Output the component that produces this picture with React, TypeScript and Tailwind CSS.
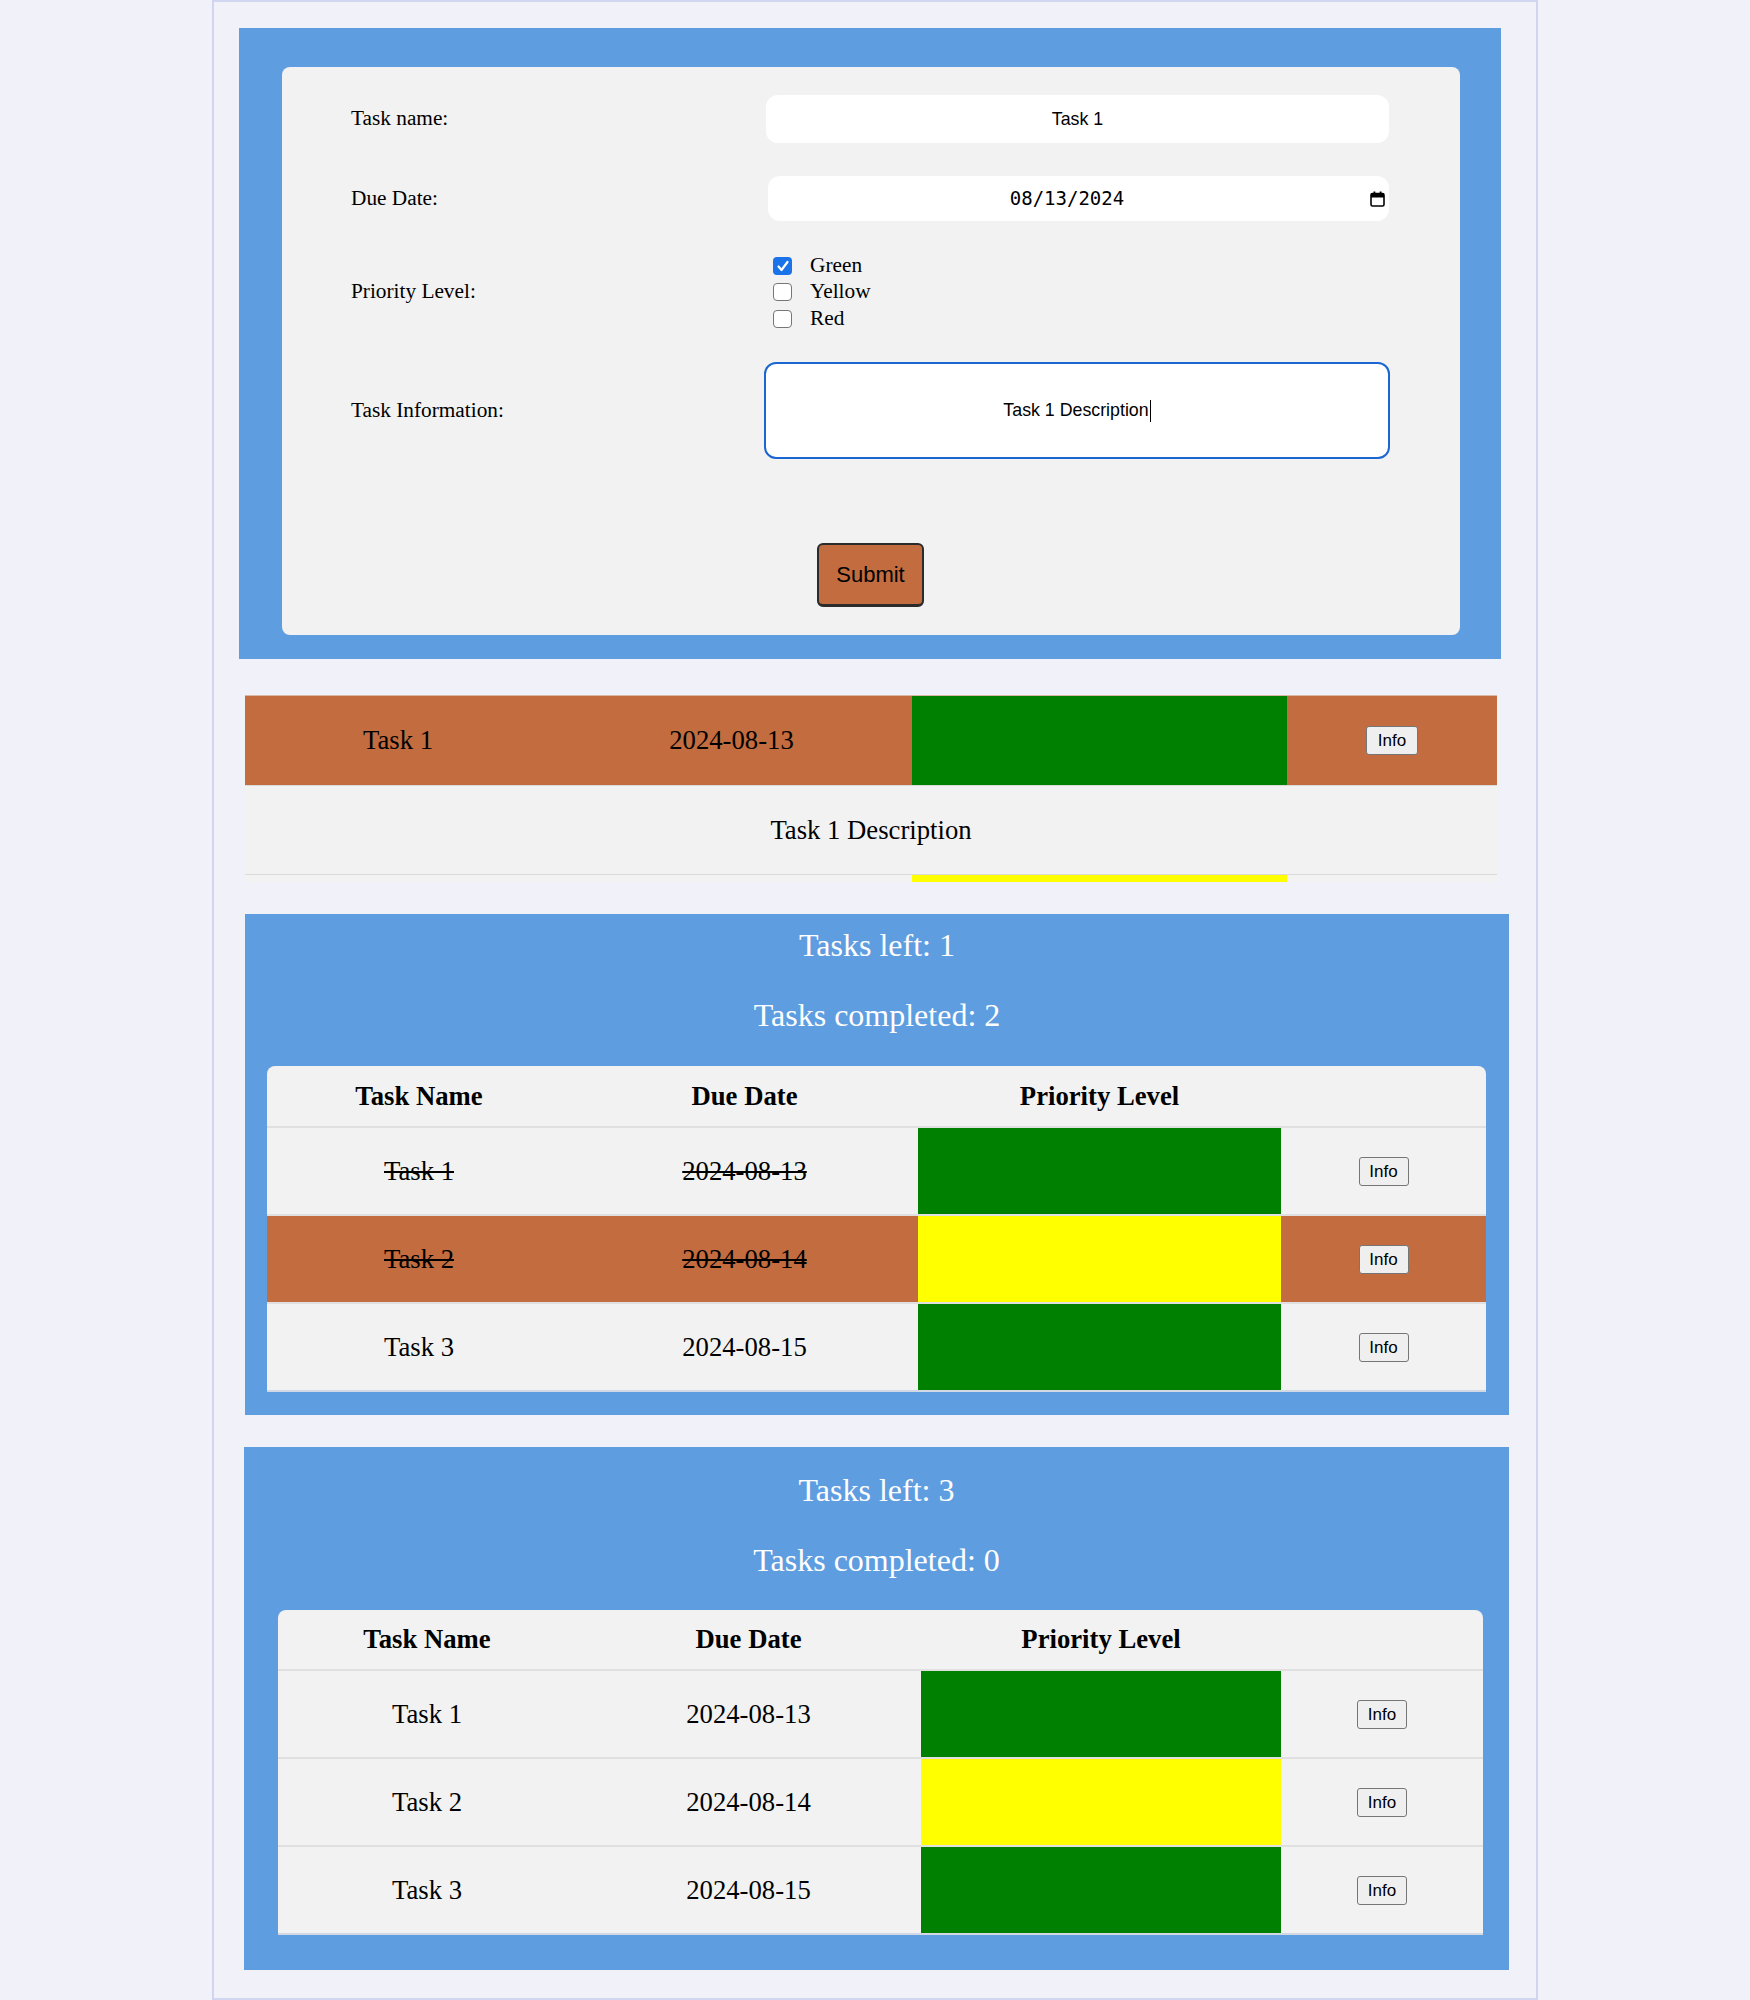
import React from 'react';

type Task = {
  name: string;
  date: string;
  color: 'green' | 'yellow';
  done?: boolean;
  hi?: boolean;
};

const SERIF = "font-['Liberation_Serif',serif]";

function InfoButton({ wide }: { wide?: boolean }) {
  return (
    <button
      className={`${wide ? 'w-[52px]' : 'w-[50px]'} h-[29px] rounded-[3px] border border-[#767676] bg-[#efefef] font-['Liberation_Sans',sans-serif] text-[17px] leading-none text-black`}
    >
      Info
    </button>
  );
}

function CheckBox({ checked, label }: { checked?: boolean; label: string }) {
  return (
    <div className="flex h-[26.5px] items-center">
      {checked ? (
        <div className="flex h-[18px] w-[19px] items-center justify-center rounded-[4px] bg-[#1a73e8]">
          <svg width="14" height="14" viewBox="0 0 14 14">
            <polyline points="2.5,7.5 5.5,11 11.5,3" fill="none" stroke="white" strokeWidth="2.2" strokeLinecap="round" strokeLinejoin="round" />
          </svg>
        </div>
      ) : (
        <div className="h-[18px] w-[19px] rounded-[4px] border-[1.5px] border-[#767676] bg-white" />
      )}
      <span className="ml-[18px] text-[21.3px]">{label}</span>
    </div>
  );
}

function TaskRow({ task, cols }: { task: Task; cols: string[] }) {
  const strike = task.done ? 'line-through decoration-2' : '';
  return (
    <div className={`flex h-[88px] border-t-2 border-[#e0e0e0] ${task.hi ? 'bg-[#c26c3f]' : ''}`}>
      <div className={`${cols[0]} flex items-center justify-center ${strike}`}>{task.name}</div>
      <div className={`${cols[1]} flex items-center justify-center ${strike}`}>{task.date}</div>
      <div className={`${cols[2]} ${task.color === 'green' ? 'bg-[#008000]' : 'bg-[#ffff00]'}`} />
      <div className={`${cols[3]} flex items-center justify-center`}>
        <InfoButton />
      </div>
    </div>
  );
}

function TaskTable({ tasks, cols, headH, box }: { tasks: Task[]; cols: string[]; headH: string; box: string }) {
  return (
    <div className={`${box} overflow-hidden rounded-t-[8px] border-b-2 border-[#d3d9e4] bg-[#f2f2f2] text-[26.7px] text-black`}>
      <div className={`flex ${headH} font-bold`}>
        <div className={`${cols[0]} flex items-center justify-center`}>Task Name</div>
        <div className={`${cols[1]} flex items-center justify-center`}>Due Date</div>
        <div className={`${cols[2]} flex items-center justify-center`}>Priority Level</div>
        <div className={cols[3]} />
      </div>
      {tasks.map((t) => (
        <TaskRow key={t.name} task={t} cols={cols} />
      ))}
    </div>
  );
}

export default function App() {
  const done: Task[] = [
    { name: 'Task 1', date: '2024-08-13', color: 'green', done: true },
    { name: 'Task 2', date: '2024-08-14', color: 'yellow', done: true, hi: true },
    { name: 'Task 3', date: '2024-08-15', color: 'green' },
  ];
  const fresh: Task[] = [
    { name: 'Task 1', date: '2024-08-13', color: 'green' },
    { name: 'Task 2', date: '2024-08-14', color: 'yellow' },
    { name: 'Task 3', date: '2024-08-15', color: 'green' },
  ];

  return (
    <div className={`min-h-screen bg-[#f0f1f9] ${SERIF} text-black`}>
      <div className="mx-auto w-[1326px] border-2 border-[#d2d5f0] pt-[26px] pb-[28px]">
        {/* Form */}
        <div className="ml-[25px] w-[1262px] bg-[#5e9de0] pt-[39px] pr-[41px] pb-[24px] pl-[43px]">
          <div className="h-[568px] rounded-[8px] bg-[#f2f2f2] pt-[28px] pl-[69px]">
            <div className="flex h-[48px] items-center">
              <label className="w-[415px] text-[21.3px]">Task name:</label>
              <div className="flex h-[48px] w-[623px] items-center justify-center rounded-[12px] bg-white font-['Liberation_Sans',sans-serif] text-[17.8px]">
                Task 1
              </div>
            </div>

            <div className="mt-[33px] flex h-[45px] items-center">
              <label className="w-[415px] text-[21.3px]">Due Date:</label>
              <div className="ml-[2px] flex h-[45px] w-[621px] items-center rounded-[12px] bg-white pr-[4px]">
                <span className="flex-1 text-center font-['DejaVu_Sans_Mono',monospace] text-[19px]">08/13/2024</span>
                <svg width="15" height="16" viewBox="0 0 15 16" className="ml-[4px]">
                  <rect x="1" y="2.5" width="13" height="12.5" rx="1.5" fill="none" stroke="black" strokeWidth="1.6" />
                  <rect x="1" y="2.5" width="13" height="4" fill="black" />
                  <rect x="3.5" y="0.5" width="1.8" height="3" fill="black" />
                  <rect x="9.7" y="0.5" width="1.8" height="3" fill="black" />
                </svg>
              </div>
            </div>

            <div className="mt-[32px] flex h-[78px] items-center">
              <label className="w-[415px] text-[21.3px]">Priority Level:</label>
              <div className="ml-[7px]">
                <CheckBox checked label="Green" />
                <CheckBox label="Yellow" />
                <CheckBox label="Red" />
              </div>
            </div>

            <div className="mt-[31px] flex h-[97px] items-center">
              <label className="w-[415px] text-[21.3px]">Task Information:</label>
              <div className="-ml-[2px] flex h-[97px] w-[626px] items-center justify-center rounded-[12px] border-[2.5px] border-[#1a66d2] bg-white font-['Liberation_Sans',sans-serif] text-[17.8px]">
                <span>Task 1 Description</span>
                <span className="ml-[1px] h-[22px] w-[1px] bg-black" />
              </div>
            </div>

            <button className="mt-[84px] ml-[466px] h-[64px] w-[107px] rounded-[6px] border-2 border-b-[3px] border-[#2b2b2b] bg-[#c26c3f] font-['Liberation_Sans',sans-serif] text-[22px] text-black">
              Submit
            </button>
          </div>
        </div>

        {/* Expanded task */}
        <div className="mt-[36px] ml-[31px] w-[1252px] text-[26.7px]">
          <div className="flex h-[90px] border-t border-[#d9b8a6] bg-[#c26c3f]">
            <div className="flex w-[306px] items-center justify-center">Task 1</div>
            <div className="flex w-[361px] items-center justify-center">2024-08-13</div>
            <div className="w-[375px] bg-[#008000]" />
            <div className="flex w-[210px] items-center justify-center">
              <InfoButton wide />
            </div>
          </div>
          <div className="flex h-[90px] items-center justify-center border-t border-b border-[#dadada] bg-[#f2f2f2]">
            Task 1 Description
          </div>
          <div className="flex h-[7px] bg-[#f2f2f2]">
            <div className="w-[667px]" />
            <div className="w-[375px] bg-[#ffff00]" />
          </div>
        </div>

        {/* Stats 1 */}
        <div className="mt-[32px] ml-[31px] w-[1264px] bg-[#5e9de0] pb-[23px]">
          <div className="flex h-[62px] items-center justify-center text-[32px] text-white">Tasks left: 1</div>
          <div className="mt-[8px] flex h-[62px] items-center justify-center text-[32px] text-white">Tasks completed: 2</div>
          <TaskTable
            tasks={done}
            box="mt-[20px] ml-[22px] w-[1219px]"
            headH="h-[60px]"
            cols={['w-[304px]', 'w-[347px]', 'w-[363px]', 'w-[205px]']}
          />
        </div>

        {/* Stats 2 */}
        <div className="mt-[32px] ml-[30px] w-[1265px] bg-[#5e9de0] pt-[12px] pb-[35px]">
          <div className="flex h-[62px] items-center justify-center text-[32px] text-white">Tasks left: 3</div>
          <div className="mt-[8px] flex h-[62px] items-center justify-center text-[32px] text-white">Tasks completed: 0</div>
          <TaskTable
            tasks={fresh}
            box="mt-[19px] ml-[34px] w-[1205px]"
            headH="h-[59px]"
            cols={['w-[298px]', 'w-[345px]', 'w-[360px]', 'w-[202px]']}
          />
        </div>
      </div>
    </div>
  );
}
